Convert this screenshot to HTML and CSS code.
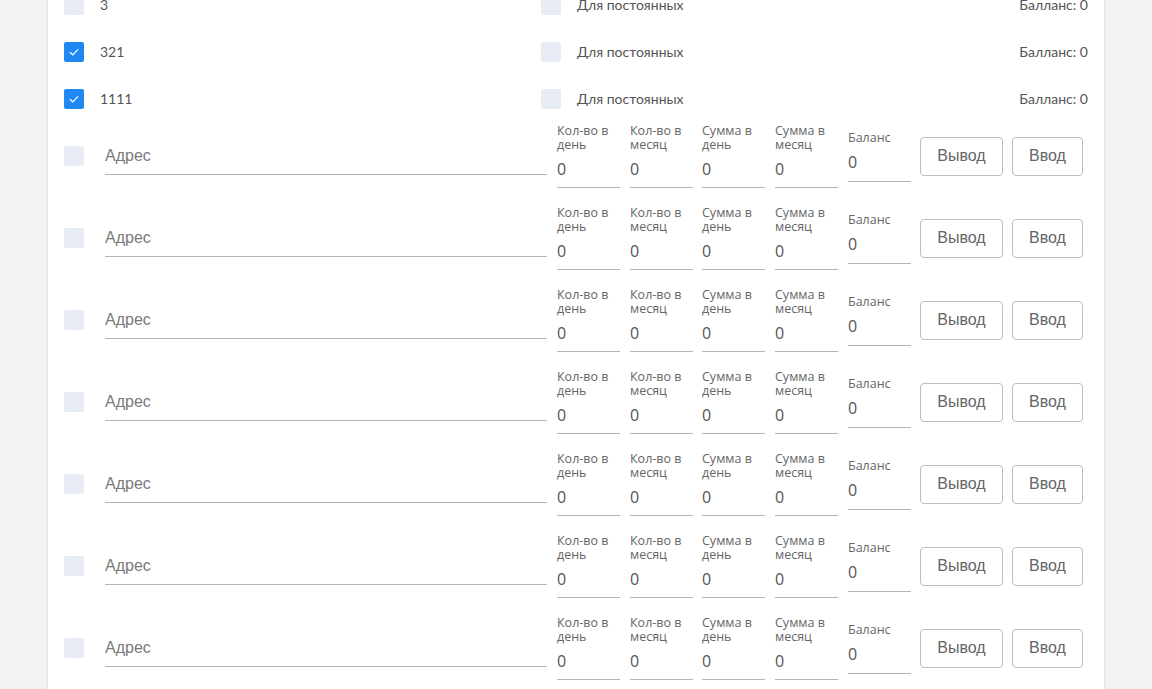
FILE: index.html
```html
<!DOCTYPE html>
<html lang="ru">
<head>
    <meta charset="UTF-8">
    <title>Адреса</title>
    <link rel="stylesheet" href="styles.css">
</head>
<body>
<div class="panel">
    <div class="accounts">
        <div class="acc-row">
            <div class="acc-name"><span class="box"></span>3</div>
            <div class="acc-name"><span class="box"></span>Для постоянных</div>
            <div class="acc-bal">Балланс: 0</div>
        </div>
        <div class="acc-row">
            <div class="acc-name"><span class="box checked"><svg viewBox="0 0 20 20"><path d="M6 10.2l2.8 2.6 5.2-5.4"/></svg></span>321</div>
            <div class="acc-name"><span class="box"></span>Для постоянных</div>
            <div class="acc-bal">Балланс: 0</div>
        </div>
        <div class="acc-row">
            <div class="acc-name"><span class="box checked"><svg viewBox="0 0 20 20"><path d="M6 10.2l2.8 2.6 5.2-5.4"/></svg></span>1111</div>
            <div class="acc-name"><span class="box"></span>Для постоянных</div>
            <div class="acc-bal">Балланс: 0</div>
        </div>
    </div>
    <div id="addr-list" class="addr-list"></div>
</div>
<template id="addr-tpl">
    <div class="addr-row">
        <span class="box"></span>
        <input class="addr-input" type="text" placeholder="Адрес">
        <div class="field">
            <label>Кол-во в день</label>
            <input type="text" value="0">
        </div>
        <div class="field">
            <label>Кол-во в месяц</label>
            <input type="text" value="0">
        </div>
        <div class="field">
            <label>Сумма в день</label>
            <input type="text" value="0">
        </div>
        <div class="field">
            <label>Сумма в месяц</label>
            <input type="text" value="0">
        </div>
        <div class="field short">
            <label>Баланс</label>
            <input type="text" value="0">
        </div>
        <button class="btn btn-out">Вывод</button>
        <button class="btn btn-in">Ввод</button>
    </div>
</template>
<script>
    var list = document.getElementById('addr-list');
    var tpl = document.getElementById('addr-tpl');
    for (var i = 0; i < 7; i++) {
        list.appendChild(tpl.content.cloneNode(true));
    }
</script>
</body>
</html>
```

FILE: styles.css
```css
*{
    box-sizing: border-box;
}
html, body{
    margin: 0;
    height: 100%;
    overflow: hidden;
}
body{
    background: #f3f2f0;
    font-family: 'Open Sans', sans-serif;
    color: #555;
}
.panel{
    display: flow-root;
    width: 1058px;
    margin-left: 47px;
    min-height: 100%;
    background: #fff;
    border-left: 1px solid #e6e5e3;
    border-right: 1px solid #e6e5e3;
    padding: 0 16px;
}
.accounts{
    margin-top: -19px;
}
.acc-row{
    display: grid;
    grid-template-columns: 477px 1fr auto;
    align-items: center;
    height: 47px;
    font-family: 'Lato', sans-serif;
    font-size: 14px;
    color: #555;
}
.acc-name{
    display: flex;
    align-items: center;
}
.acc-name .box{
    margin-right: 16px;
}
.box{
    display: inline-block;
    flex: none;
    width: 20px;
    height: 20px;
    border-radius: 2px;
    background: #e8edf5;
}
.box.checked{
    background: #2188f3;
}
.box svg{
    display: block;
    width: 20px;
    height: 20px;
    fill: none;
    stroke: #fff;
    stroke-width: 1.2;
}
.addr-list{
    display: flex;
    flex-direction: column;
    gap: 16px;
    margin-top: 1px;
}
.addr-row{
    display: flex;
    align-items: center;
    height: 66px;
}
.addr-row > .box{
    margin-right: 21px;
}
input{
    outline: none;
    border: none;
    border-bottom: 1px solid #b5b5b5;
    background: transparent;
    padding: 0;
}
.addr-input{
    width: 442px;
    height: 37px;
    font-family: 'Liberation Sans', Arial, sans-serif;
    font-size: 16px;
    color: #555;
    margin-right: 10px;
}
.addr-input::placeholder{
    color: #7a7a7a;
}
.field{
    display: flex;
    flex-direction: column;
    width: 63px;
    margin-right: 10px;
}
.field:nth-of-type(2){
    margin-right: 9px;
}
.field label{
    font-size: 12.5px;
    line-height: 14px;
    height: 28px;
    color: #666;
}
.field input{
    width: 63px;
    height: 36px;
    font-family: 'Open Sans', sans-serif;
    font-size: 16px;
    color: #555;
    padding-bottom: 2px;
}
.field.short{
    margin-right: 9px;
}
.field.short label{
    height: 14px;
}
.field.short input{
    height: 37px;
    padding-bottom: 2px;
}
.btn{
    height: 39px;
    background: #fff;
    border: 1px solid #bdbdbd;
    border-radius: 4px;
    font-family: 'Liberation Sans', Arial, sans-serif;
    font-size: 16px;
    color: #666;
    padding: 0;
    cursor: pointer;
}
.btn-out{
    width: 83px;
    margin-right: 9px;
}
.btn-in{
    width: 71px;
}
```
